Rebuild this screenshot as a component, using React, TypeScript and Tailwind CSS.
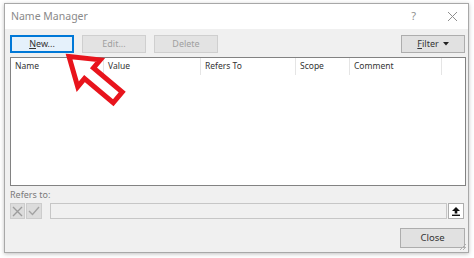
import React from 'react'

const font = { fontFamily: '"Noto Sans", "Open Sans", Arial, sans-serif' }

function Btn({ children, className = '' }: { children: React.ReactNode; className?: string }) {
    return (
        <div className={`h-[18px] w-[64px] flex items-center justify-center text-[9px] ${className}`}>
            {children}
        </div>
    )
}

export default function App() {
    const enabled = "bg-[#e1e1e1] border border-[#adadad] text-[#333]"
    const disabled = "bg-[#e3e3e3] border border-[#cfcfcf] text-[#a0a0a0]"
    const headCell = "h-full flex items-center pl-[4px] border-r border-[#e5e5e5]"

    return (
        <div className="relative w-[474px] h-[258px] bg-white pl-[4px] pt-[3px]" style={font}>
            <div className="w-[465px] h-[250px] border border-[#a8a8a8] flex flex-col shadow-[0_1px_4px_rgba(0,0,0,0.25)]">

                {/* Title bar */}
                <div className="h-[25px] bg-white flex items-center pl-[6px] pr-[10px] shrink-0">
                    <span className="text-[10.5px] text-[#8a8a8a]">Name Manager</span>
                    <span className="ml-auto text-[11px] text-[#8f8f8f] mr-[31px]">?</span>
                    <svg width="11" height="11" viewBox="0 0 11 11">
                        <path d="M1 1 L10 10 M10 1 L1 10" stroke="#8f8f8f" strokeWidth="1" />
                    </svg>
                </div>

                {/* Body */}
                <div className="flex-1 bg-[#f0f0f0] pl-[5px] pr-[2px] pt-[6px] flex flex-col relative">
                    <div className="flex items-center">
                        <Btn className="bg-[#e5f1fb] border border-[#0078d7] text-[#333] shadow-[inset_0_0_0_1px_#0078d7]">
                            <span><span className="underline">N</span>ew...</span>
                        </Btn>
                        <Btn className={`ml-[8px] ${disabled}`}>Edit...</Btn>
                        <Btn className={`ml-[8px] ${disabled}`}>Delete</Btn>
                        <Btn className={`ml-auto mr-[1px] ${enabled}`}>
                            <span><span className="underline">F</span>ilter</span>
                            <svg width="6" height="4" viewBox="0 0 6 4" className="ml-[4px]"><path d="M0 0 H6 L3 3.5 Z" fill="#222" /></svg>
                        </Btn>
                    </div>

                    {/* List */}
                    <div className="mt-[4px] h-[129px] w-[456px] bg-white border border-[#828282]">
                        <div className="h-[17px] flex text-[8.5px] text-[#333]">
                            <div className={`w-[93px] ${headCell}`}>Name</div>
                            <div className={`w-[97px] ${headCell}`}>Value</div>
                            <div className={`w-[95px] ${headCell}`}>Refers To</div>
                            <div className={`w-[54px] ${headCell}`}>Scope</div>
                            <div className={`w-[92px] ${headCell}`}>Comment</div>
                        </div>
                    </div>

                    <div className="mt-[3px] h-[12px] leading-[12px] text-[9px] text-[#7a7a7a]">Refers to:</div>

                    <div className="mt-[2px] h-[16px] flex items-center">
                        <div className="w-[15px] h-[16px] bg-[#dcdcdc] border border-[#cccccc] flex items-center justify-center">
                            <svg width="11" height="11" viewBox="0 0 11 11"><path d="M1 1 L10 10 M10 1 L1 10" stroke="#9c9c9c" strokeWidth="1.4" /></svg>
                        </div>
                        <div className="ml-[1px] w-[16px] h-[16px] bg-[#dcdcdc] border border-[#cccccc] flex items-center justify-center">
                            <svg width="12" height="10" viewBox="0 0 12 10"><path d="M1 5 L4.5 8.5 L11 1" stroke="#a3a3a3" strokeWidth="1.4" fill="none" /></svg>
                        </div>
                        <div className="ml-[8px] w-[397px] h-[16px] bg-[#f0f0f0] border border-[#c6c6c6]" />
                        <div className="ml-[1px] w-[16px] h-[16px] bg-white border border-[#adadad] flex items-center justify-center">
                            <svg width="8" height="9" viewBox="0 0 8 9">
                                <path d="M4 0 L8 4 H5.3 V6.5 H2.7 V4 H0 Z" fill="#111" />
                                <rect x="0" y="7.6" width="8" height="1.4" fill="#111" />
                            </svg>
                        </div>
                    </div>

                    <div className="mt-[9px] flex">
                        <div className={`ml-auto mr-[1px] h-[20px] w-[65px] flex items-center justify-center text-[9.5px] ${enabled}`}>Close</div>
                    </div>

                    {/* resize grip */}
                    <svg width="8" height="8" viewBox="0 0 8 8" className="absolute right-[1px] bottom-[1px]">
                        <path d="M7 1 L1 7 M7 4 L4 7" stroke="#b0b0b0" strokeWidth="1" />
                    </svg>
                </div>
            </div>

            {/* Red callout arrow */}
            <svg width="474" height="258" className="absolute left-0 top-0 pointer-events-none">
                <g transform="translate(66 54) rotate(40)">
                    <polygon points="4,0 30,-17.5 30,-7 67.5,-7 67.5,7 30,7 30,17.5" fill="white" stroke="#e8141c" strokeWidth="5" strokeLinejoin="miter" />
                </g>
            </svg>
        </div>
    )
}
